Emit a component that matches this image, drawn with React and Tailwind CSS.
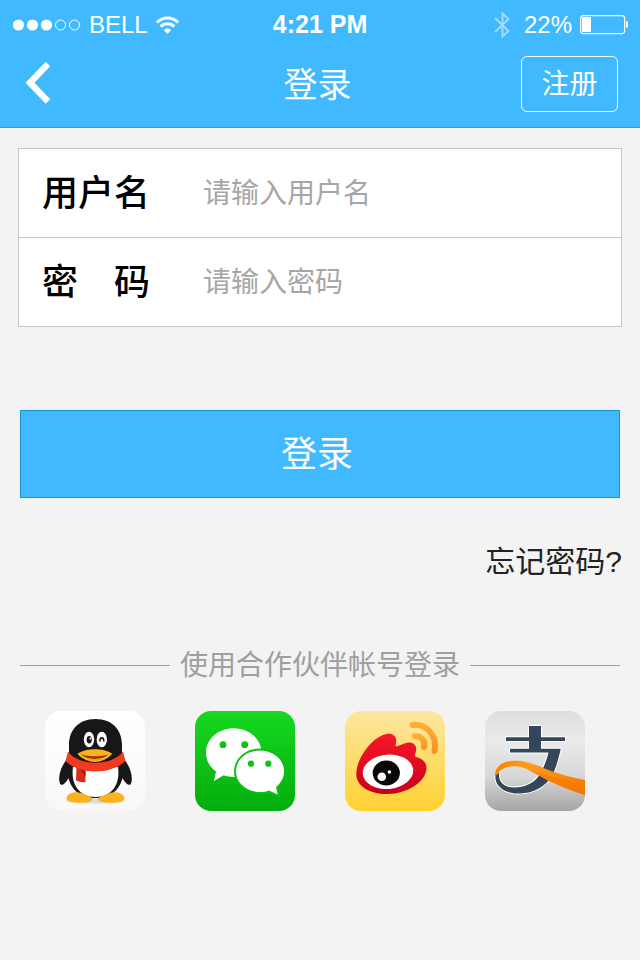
import React from 'react';

function StatusBar() {
  return (
    <div className="grid grid-cols-[1fr_auto_1fr] items-center h-12 px-3 pt-px text-2xl">
      <div className="flex items-center gap-2">
        <svg className="w-[69px] h-3" viewBox="0 0 69 12" fill="none" stroke="white">
          <circle cx="6.5" cy="6" r="5.6" fill="white" stroke="none" />
          <circle cx="20.5" cy="6" r="5.6" fill="white" stroke="none" />
          <circle cx="34.5" cy="6" r="5.6" fill="white" stroke="none" />
          <circle cx="48.5" cy="6" r="5" />
          <circle cx="62.5" cy="6" r="5" />
        </svg>
        <span>BELL</span>
        <svg className="w-6 h-[18px]" viewBox="0 0 24 18" fill="none" stroke="white" strokeWidth="3">
          <path d="M0.9 6.4 A15 15 0 0 1 22.1 6.4" />
          <path d="M4.7 10.6 A9.6 9.6 0 0 1 18.3 10.6" />
          <path d="M11.5 18 L7.8 14 A5.6 5.6 0 0 1 15.2 14 Z" fill="white" stroke="none" />
        </svg>
      </div>
      <span className="text-[25px] font-bold">4:21 PM</span>
      <div className="flex items-center justify-end gap-2">
        <svg className="w-4 h-7 mr-1.5" viewBox="0 0 16 28" fill="none" stroke="white" strokeWidth="2" opacity="0.5">
          <path d="M1 7 L14.5 20 L8.5 25.5 V2.5 L14.5 8 L1 21" />
        </svg>
        <span>22%</span>
        <svg className="w-12 h-5" viewBox="0 0 48 20" fill="none">
          <rect x="0.6" y="0.6" width="44" height="18" rx="2.5" stroke="white" strokeWidth="1.2" />
          <rect x="2" y="2" width="9" height="15" rx="1" fill="white" />
          <path d="M46 6 C49.5 6.5 49.5 12.5 46 13 Z" fill="white" />
        </svg>
      </div>
    </div>
  );
}

function Field({ id, label, type, placeholder }) {
  return (
    <div className="flex items-center box-content h-[88px] pl-[23px]">
      <label htmlFor={id} className="w-[161px] shrink-0 pt-0.5 text-4xl font-medium text-black whitespace-pre">
        {label}
      </label>
      <input
        id={id}
        type={type}
        placeholder={placeholder}
        className="flex-1 min-w-0 h-full pt-0.5 text-[28px] text-black placeholder:text-[#a6a6a6] placeholder:opacity-100 bg-transparent outline-none"
      />
    </div>
  );
}

function QQIcon() {
  return (
    <svg viewBox="0 0 100 100" className="size-full">
      <defs>
        <linearGradient id="qqBg" x1="0" y1="0" x2="0" y2="1">
          <stop offset="0" stopColor="#ffffff" />
          <stop offset="1" stopColor="#f8f8f8" />
        </linearGradient>
      </defs>
      <rect width="100" height="100" rx="16" fill="url(#qqBg)" />
      <ellipse cx="50.5" cy="90" rx="29" ry="2.6" fill="#d9dde2" />
      {/* wings and body */}
      <path d="M24 46 C17 53 13 63 14.5 71 C15.5 76 19.5 74 23 68 L32 56 Z" fill="#171717" />
      <path d="M77 46 C84 53 88 63 86.5 71 C85.5 76 81.5 74 78 68 L69 56 Z" fill="#171717" />
      <path d="M50.5 8 C33 8 24 19.5 24 34 V46 C19 66 26 87 50.5 87 C75 87 82 66 77 46 V34 C77 19.5 68 8 50.5 8 Z" fill="#171717" />
      <path d="M28 56 C25.5 73 34 86 50.5 86 C67 86 75.5 73 73 56 Z" fill="#fff" />
      {/* feet */}
      <path d="M21.5 87.5 C21.5 83 29 80 36 82 C41 84 48 85.5 47.8 88.5 C47.5 92.5 21.5 93.5 21.5 87.5 Z" fill="#fbb21b" />
      <path d="M79.5 87.5 C79.5 83 72 80 65 82 C60 84 52.7 85.5 52.9 88.5 C53.2 92.5 79.5 93.5 79.5 87.5 Z" fill="#fbb21b" />
      {/* scarf */}
      <path d="M31.5 55 L40.5 58 V71 Q36 72 31 69.5 Z" fill="#dd2c19" />
      <path d="M35 58.5 L40.5 59.5 V65 Z" fill="#9f190f" />
      <path d="M23 40.5 C34 55.5 67 55.5 78 40.5 L80.5 50 C66 64 35 64 20.5 50 Z" fill="#f03a22" />
      {/* face */}
      <ellipse cx="44" cy="28.5" rx="5.2" ry="7.7" fill="#fff" />
      <ellipse cx="56.8" cy="28.5" rx="5.2" ry="7.7" fill="#fff" />
      <ellipse cx="44.2" cy="28.8" rx="2.6" ry="3.7" fill="#171717" />
      <circle cx="45.3" cy="27.6" r="1" fill="#fff" />
      <path d="M54.9 30 C54.9 25.8 58.8 25.8 58.8 30" fill="none" stroke="#171717" strokeWidth="1.6" strokeLinecap="round" />
      <path d="M32.3 42.8 C37 39.5 44 38.2 50 38.2 C56 38.2 63 39.5 67.3 42.8 C62 48.5 56 51 50 51 C44 51 37.5 48.5 32.3 42.8 Z" fill="#fbb21b" />
      <path d="M35.5 43.3 C43 46 57 46 64 43.3 C57 49.5 43 49.5 35.5 43.3 Z" fill="#982d12" />
      <path d="M41.5 47 Q50 48.8 58.5 47 Q50 52 41.5 47 Z" fill="#f49619" />
    </svg>
  );
}

function WeChatIcon() {
  return (
    <svg viewBox="0 0 100 100" className="size-full">
      <defs>
        <linearGradient id="wechatBg" x1="0" y1="0" x2="0" y2="1">
          <stop offset="0" stopColor="#17d81f" />
          <stop offset="1" stopColor="#04ac0d" />
        </linearGradient>
      </defs>
      <rect width="100" height="100" rx="16" fill="url(#wechatBg)" />
      <path d="M38.7 17.3 C54 17.3 66.5 28 66.5 41.7 C66.5 55 54 66 38.7 66 C35 66 31.5 65.3 28.5 64.3 L19 70 L21 60.5 C14.5 56 11 49 11 41.7 C11 28 23.5 17.3 38.7 17.3 Z" fill="#fff" />
      <path d="M65 39.5 C51.5 39.5 41 48.5 41 60.3 C41 72 51.5 81 65 81 C68 81 71.5 80.5 74 79.5 L82.7 83.5 L81 76 C86 72 89 66.5 89 60.3 C89 48.5 78.5 39.5 65 39.5 Z" fill="#fff" stroke="#0cbf15" strokeWidth="4" paintOrder="stroke" />
      <g fill="#0dc216">
        <circle cx="28" cy="33.7" r="3.4" />
        <circle cx="49.7" cy="33.7" r="3.4" />
        <circle cx="56" cy="52.7" r="3.1" />
        <circle cx="73.3" cy="52.7" r="3.1" />
      </g>
    </svg>
  );
}

function WeiboIcon() {
  return (
    <svg viewBox="0 0 100 100" className="size-full">
      <defs>
        <linearGradient id="weiboBg" x1="0" y1="0" x2="0" y2="1">
          <stop offset="0" stopColor="#fce7a1" />
          <stop offset="1" stopColor="#ffd131" />
        </linearGradient>
        <linearGradient id="weiboBody" x1="0" y1="0" x2="0" y2="1">
          <stop offset="0" stopColor="#f8182b" />
          <stop offset="1" stopColor="#c9001a" />
        </linearGradient>
        <linearGradient id="weiboWave" x1="0" y1="0" x2="0" y2="1">
          <stop offset="0" stopColor="#fbb03b" />
          <stop offset="1" stopColor="#f9931e" />
        </linearGradient>
      </defs>
      <rect width="100" height="100" rx="16" fill="url(#weiboBg)" />
      <path d="M11.3 63 C11.3 49 24 30 37 24.5 C44 21 50 23 51 28 C51.8 32 50 34 51 35.5 C56 34.5 61 30.5 66 31.7 C70 32.5 72 36 71 40 C70.5 43 69 45 71 46 C77 47.5 81.5 51 81.5 57 C81.5 70 63 83 42 83 C24 83 11.3 75 11.3 63 Z" fill="url(#weiboBody)" />
      <ellipse cx="43" cy="60.8" rx="25.3" ry="17.2" fill="#fff" transform="rotate(-5 43 60.8)" />
      <ellipse cx="41.3" cy="62" rx="13.6" ry="12.4" fill="#080808" />
      <circle cx="36.8" cy="65.8" r="4.3" fill="#fff" />
      <circle cx="44.4" cy="61" r="1.8" fill="#fff" />
      <g fill="none" stroke="url(#weiboWave)" strokeLinecap="round" strokeWidth="6">
        <path d="M67.5 14 C82 12.5 92.5 25 89.5 40" />
        <path d="M70 25.3 C76 24.5 81 30 79 36" />
      </g>
    </svg>
  );
}

function AlipayIcon() {
  return (
    <svg viewBox="0 0 100 100" className="size-full">
      <defs>
        <linearGradient id="alipayBg" x1="0" y1="0" x2="0" y2="1">
          <stop offset="0" stopColor="#dedede" />
          <stop offset="0.3" stopColor="#eaeaea" />
          <stop offset="0.65" stopColor="#d8d8d8" />
          <stop offset="1" stopColor="#a5a5a5" />
        </linearGradient>
        <linearGradient id="alipayRibbon" x1="0" y1="0" x2="1" y2="0">
          <stop offset="0" stopColor="#f78200" />
          <stop offset="0.35" stopColor="#ff9c1c" />
          <stop offset="1" stopColor="#f87c00" />
        </linearGradient>
        <clipPath id="alipayClip">
          <rect width="100" height="100" rx="16" />
        </clipPath>
      </defs>
      <g clipPath="url(#alipayClip)">
        <rect width="100" height="100" fill="url(#alipayBg)" />
        <g fill="#35455a" stroke="#fff" strokeWidth="2" paintOrder="stroke">
          <path d="M44 15 H56 V26.3 H80 V30 H56 V37.7 H75.7 C72 56 67 68 59 74 C52 80 43 82.5 32 82.5 C19 82 10 75 10.3 65 L14 61 C13 70 18 76.5 29 76.5 C40 76.5 48 72 53 66 C58 59 61 51 63.5 41.5 H25 V37.7 H44 V30 H21 V26.3 H44 Z" />
        </g>
        <path d="M10 67 C9 55 18 49.5 31 49.7 C45 50 56 56.5 66 60 C77 64 89 67 100 69 V84 C84 79 73 74 62 69 C49 62 41 55.5 29 55.3 C19 55.3 13 60 10 67 Z" fill="url(#alipayRibbon)" />
        <path d="M82 69 L100 76 V84 C84 79 73 74 62 69 C54 65 48 61 42 58.5 C54 61 68 67 82 69 Z" fill="#ee7100" opacity="0.5" />
      </g>
    </svg>
  );
}

function PartnerLink({ label, children }) {
  return (
    <a href="#" aria-label={label} className="block size-[100px]">
      {children}
    </a>
  );
}

export default function App() {
  return (
    <div className="min-h-screen bg-[#f3f3f3] font-['Liberation_Sans','Noto_Sans_CJK_SC',sans-serif]">
      {/* Header */}
      <header className="bg-[#40b9ff] text-white border-b border-[#1ba6ef]">
        <StatusBar />
        <div className="flex items-center justify-between px-[22px] pt-2 pb-[15px]">
          <button type="button" aria-label="返回" className="w-[92px] h-14">
            <svg className="w-8 h-12" viewBox="0 0 32 48" fill="none" stroke="white" strokeWidth="6.4">
              <path d="M26 4 L8 22.7 L26 41.5" />
            </svg>
          </button>
          <h1 className="pt-0.5 text-[34px] leading-13">登录</h1>
          <button type="button" className="w-[97px] h-14 pt-0.5 border border-white rounded-md text-[28px]">
            注册
          </button>
        </div>
      </header>

      <main>
        {/* Login form */}
        <form className="pt-5" onSubmit={(e) => e.preventDefault()}>
          <div className="mx-[18px] bg-white border border-[#c4c4c4] divide-y divide-[#c4c4c4]">
            <Field id="username" label="用户名" type="text" placeholder="请输入用户名" />
            <Field id="password" label="密　码" type="password" placeholder="请输入密码" />
          </div>
          <div className="mx-5 mt-[83px]">
            <button type="submit" className="w-full h-[88px] pt-0.5 pr-1.5 bg-[#40b9ff] border border-[#1295cf] text-4xl text-white">
              登录
            </button>
          </div>
        </form>

        <div className="flex justify-end mt-10 px-[18px]">
          <a href="#" className="text-3xl leading-12 text-[#222222]">忘记密码?</a>
        </div>

        {/* Partner accounts */}
        <section className="mt-[58px]">
          <div className="flex items-center gap-2.5 px-5">
            <span className="flex-1 h-px bg-[#a0a0a0]" />
            <h2 className="pt-0.5 text-[28px] leading-10 text-[#9f9f9f]">使用合作伙伴帐号登录</h2>
            <span className="flex-1 h-px bg-[#a0a0a0]" />
          </div>
          <div className="flex justify-center gap-10 mt-[25px] pr-2.5">
            <div className="flex gap-[50px]">
              <PartnerLink label="QQ">
                <QQIcon />
              </PartnerLink>
              <PartnerLink label="微信">
                <WeChatIcon />
              </PartnerLink>
              <PartnerLink label="微博">
                <WeiboIcon />
              </PartnerLink>
            </div>
            <PartnerLink label="支付宝">
              <AlipayIcon />
            </PartnerLink>
          </div>
        </section>
      </main>
    </div>
  );
}
